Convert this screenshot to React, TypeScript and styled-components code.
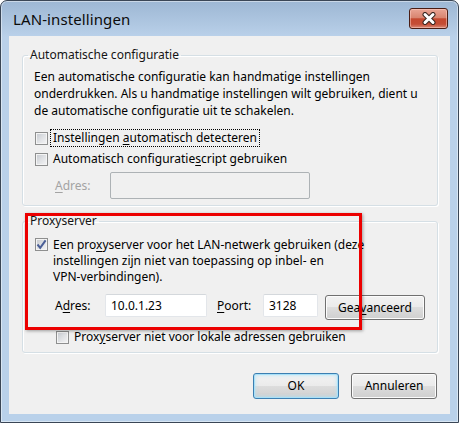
import React from "react";
import styled, { createGlobalStyle } from "styled-components";

const GlobalStyle = createGlobalStyle`
  html, body { margin: 0; padding: 0; background: #ffffff; }
  body { font-family: "Noto Sans", "Open Sans", sans-serif; font-size: 12px; color: #000; }
  * { box-sizing: border-box; }
`;

const Window = styled.div`
  width: 459px;
  height: 423px;
  border: 1px solid #3a4656;
  border-radius: 7px 7px 0 0;
  background: linear-gradient(180deg, #9db7d4 0px, #b0c8e2 24px, #bad1ea 36px, #b9d1ea 100%);
  padding: 0 8px 8px 8px;
  display: flex;
  flex-direction: column;
  box-shadow: inset 0 0 0 1px rgba(255, 255, 255, 0.45);
`;

const TitleBar = styled.div`
  height: 35px;
  display: flex;
  align-items: center;
  justify-content: space-between;
  padding: 0 2px 1px 4px;
`;

const Title = styled.div`
  font-size: 15px;
  color: #0b0b0b;
  letter-spacing: 0.1px;
  margin-top: 2px;
`;

const CloseButton = styled.div`
  width: 39px;
  height: 21px;
  margin-top: 1px;
  border: 1px solid #4a1d14;
  border-radius: 3px;
  background: linear-gradient(180deg, #e9a595 0%, #d98570 45%, #c4482f 52%, #c54e36 80%, #d98a78 100%);
  box-shadow: inset 0 0 0 1px rgba(255, 210, 200, 0.5);
  display: flex;
  align-items: center;
  justify-content: center;
`;

const Client = styled.div`
  flex: 1;
  background: #f0f0f0;
  position: relative;
  padding: 0 12px 0 13px;
  display: flex;
  flex-direction: column;
`;

const GroupBox = styled.fieldset<{ $top: number; $pt: number; $pb: number }>`
  margin: ${(p) => p.$top}px 0 0 0;
  padding: ${(p) => p.$pt}px 11px ${(p) => p.$pb}px 11px;
  border: 1px solid #d5dfe5;
  border-radius: 3px;
  box-shadow: inset 1px 1px 0 #ffffff, 1px 1px 0 #ffffff;
  min-inline-size: 0;
`;

const Legend = styled.legend`
  margin-left: -6px;
  padding: 0 2px;
  line-height: 16px;
  color: #151515;
`;

const Paragraph = styled.div<{ $lh: number }>`
  line-height: ${(p) => p.$lh}px;
  white-space: nowrap;
`;

const CheckRow = styled.div<{ $mt: number; $indent: number; $align?: string }>`
  display: flex;
  align-items: ${(p) => p.$align || "center"};
  margin-top: ${(p) => p.$mt}px;
  padding-left: ${(p) => p.$indent}px;
  line-height: 16px;
`;

const Box = styled.div<{ $mt?: number }>`
  width: 13px;
  height: 13px;
  flex: none;
  margin-top: ${(p) => p.$mt || 0}px;
  border: 1px solid #8e8f8f;
  background: linear-gradient(135deg, #c4c8ce 0%, #dfe1e4 50%, #f5f5f6 100%);
  box-shadow: inset 0 0 0 1px #f4f4f4;
  display: flex;
  align-items: center;
  justify-content: center;
`;

const CheckLabel = styled.span<{ $focus?: boolean; $gap: number }>`
  margin-left: ${(p) => p.$gap}px;
  padding: 0 2px;
  white-space: nowrap;
  outline: ${(p) => (p.$focus ? "1px dotted #000" : "none")};
  outline-offset: 0;
`;

const U = styled.span`
  text-decoration: underline;
  text-underline-offset: 2px;
`;

const FieldRow = styled.div<{ $mt: number; $indent: number }>`
  display: flex;
  align-items: flex-start;
  margin-top: ${(p) => p.$mt}px;
  padding-left: ${(p) => p.$indent}px;
`;

const FieldLabel = styled.div<{ $w: number; $h: number; $disabled?: boolean; $ml?: number }>`
  width: ${(p) => p.$w}px;
  height: ${(p) => p.$h}px;
  margin-left: ${(p) => p.$ml || 0}px;
  display: flex;
  align-items: center;
  flex: none;
  color: ${(p) => (p.$disabled ? "#a3a3a3" : "#000")};
`;

const TextBox = styled.div<{ $w: number; $h: number; $disabled?: boolean; $ml?: number }>`
  width: ${(p) => p.$w}px;
  height: ${(p) => p.$h}px;
  margin-left: ${(p) => p.$ml || 0}px;
  flex: none;
  border: 1px solid ${(p) => (p.$disabled ? "#adb2b5" : "#e3e6ea")};
  border-top-color: ${(p) => (p.$disabled ? "#adb2b5" : "#d4d8dc")};
  border-radius: 2px;
  background: ${(p) => (p.$disabled ? "#f0f0f0" : "#ffffff")};
  padding-left: 5px;
  display: flex;
  align-items: center;
  padding-bottom: 1px;
`;

const Button = styled.div<{ $w: number; $h: number; $default?: boolean; $ml?: number; $mt?: number }>`
  width: ${(p) => p.$w}px;
  height: ${(p) => p.$h}px;
  margin-left: ${(p) => p.$ml || 0}px;
  margin-top: ${(p) => p.$mt || 0}px;
  flex: none;
  border: 1px solid ${(p) => (p.$default ? "#3c7fb1" : "#707070")};
  border-radius: 3px;
  background: linear-gradient(180deg, #f2f2f2 0%, #ebebeb 49%, #dddddd 50%, #cfcfcf 100%);
  box-shadow: ${(p) =>
    p.$default
      ? "inset 0 0 0 1px #a8e0f8, inset 0 0 3px 2px rgba(170, 225, 250, 0.55)"
      : "inset 0 0 0 1px #fcfcfc"};
  display: flex;
  align-items: center;
  justify-content: center;
  padding-bottom: 1px;
`;

const ButtonRow = styled.div`
  display: flex;
  justify-content: flex-end;
  margin-top: 20px;
  padding-right: 1px;
  gap: 12px;
`;

const Highlight = styled.div`
  position: absolute;
  left: 16px;
  top: 177px;
  width: 337px;
  height: 117px;
  border: 3px solid #ec0000;
  box-shadow: 1px 1px 3px rgba(0, 0, 0, 0.35);
  pointer-events: none;
`;

const CloseX = () => (
  <svg width="16" height="13" viewBox="0 0 16 13">
    <path d="M4 2.5 L12 10.5 M12 2.5 L4 10.5" stroke="#3a2620" strokeWidth="5" strokeLinecap="round" />
    <path d="M4 2.5 L12 10.5 M12 2.5 L4 10.5" stroke="#ffffff" strokeWidth="3" strokeLinecap="round" />
  </svg>
);

const Check = () => (
  <svg width="11" height="11" viewBox="0 0 11 11">
    <path d="M1.5 5.5 L4.2 8.8 L9.6 1.3" fill="none" stroke="#4a5f97" strokeWidth="2" />
  </svg>
);

export default function App() {
  return (
    <>
      <GlobalStyle />
      <Window>
        <TitleBar>
          <Title>LAN-instellingen</Title>
          <CloseButton>
            <CloseX />
          </CloseButton>
        </TitleBar>
        <Client>
          <GroupBox $top={11} $pt={5} $pb={6}>
            <Legend>Automatische configuratie</Legend>
            <Paragraph $lh={17}>
              Een automatische configuratie kan handmatige instellingen
              <br />
              onderdrukken. Als u handmatige instellingen wilt gebruiken, dient u
              <br />
              de automatische configuratie uit te schakelen.
            </Paragraph>
            <CheckRow $mt={11} $indent={1}>
              <Box />
              <CheckLabel $focus $gap={3}>
                Instellingen <U>a</U>utomatisch detecteren
              </CheckLabel>
            </CheckRow>
            <CheckRow $mt={5} $indent={1}>
              <Box />
              <CheckLabel $gap={3}>
                Automatisch configuratie<U>s</U>cript gebruiken
              </CheckLabel>
            </CheckRow>
            <FieldRow $mt={5} $indent={21}>
              <FieldLabel $w={55} $h={27} $disabled>
                <span>
                  <U>A</U>dres:
                </span>
              </FieldLabel>
              <TextBox $w={200} $h={27} $disabled />
            </FieldRow>
          </GroupBox>

          <GroupBox $top={7} $pt={8} $pb={7}>
            <Legend>Proxyserver</Legend>
            <CheckRow $mt={0} $indent={1} $align="flex-start">
              <Box $mt={1}>
                <Check />
              </Box>
              <CheckLabel $gap={3}>
                <Paragraph $lh={16}>
                  Een pro<U>x</U>yserver voor het LAN-netwerk gebruiken (deze
                  <br />
                  instellingen zijn niet van toepassing op inbel- en
                  <br />
                  VPN-verbindingen).
                </Paragraph>
              </CheckLabel>
            </CheckRow>
            <FieldRow $mt={9} $indent={21}>
              <FieldLabel $w={50} $h={23}>
                <span>
                  A<U>d</U>res:
                </span>
              </FieldLabel>
              <TextBox $w={102} $h={23}>
                10.0.1.23
              </TextBox>
              <FieldLabel $w={46} $h={23} $ml={10}>
                <span>
                  <U>P</U>oort:
                </span>
              </FieldLabel>
              <TextBox $w={55} $h={23}>
                3128
              </TextBox>
              <Button $w={100} $h={25} $ml={7} $mt={1}>
                <span>
                  Gea<U>v</U>anceerd
                </span>
              </Button>
            </FieldRow>
            <CheckRow $mt={9} $indent={22}>
              <Box />
              <CheckLabel $gap={3}>
                Prox<U>y</U>server niet voor lokale adressen gebruiken
              </CheckLabel>
            </CheckRow>
          </GroupBox>

          <ButtonRow>
            <Button $w={86} $h={26} $default>
              OK
            </Button>
            <Button $w={86} $h={26}>
              Annuleren
            </Button>
          </ButtonRow>

          <Highlight />
        </Client>
      </Window>
    </>
  );
}
